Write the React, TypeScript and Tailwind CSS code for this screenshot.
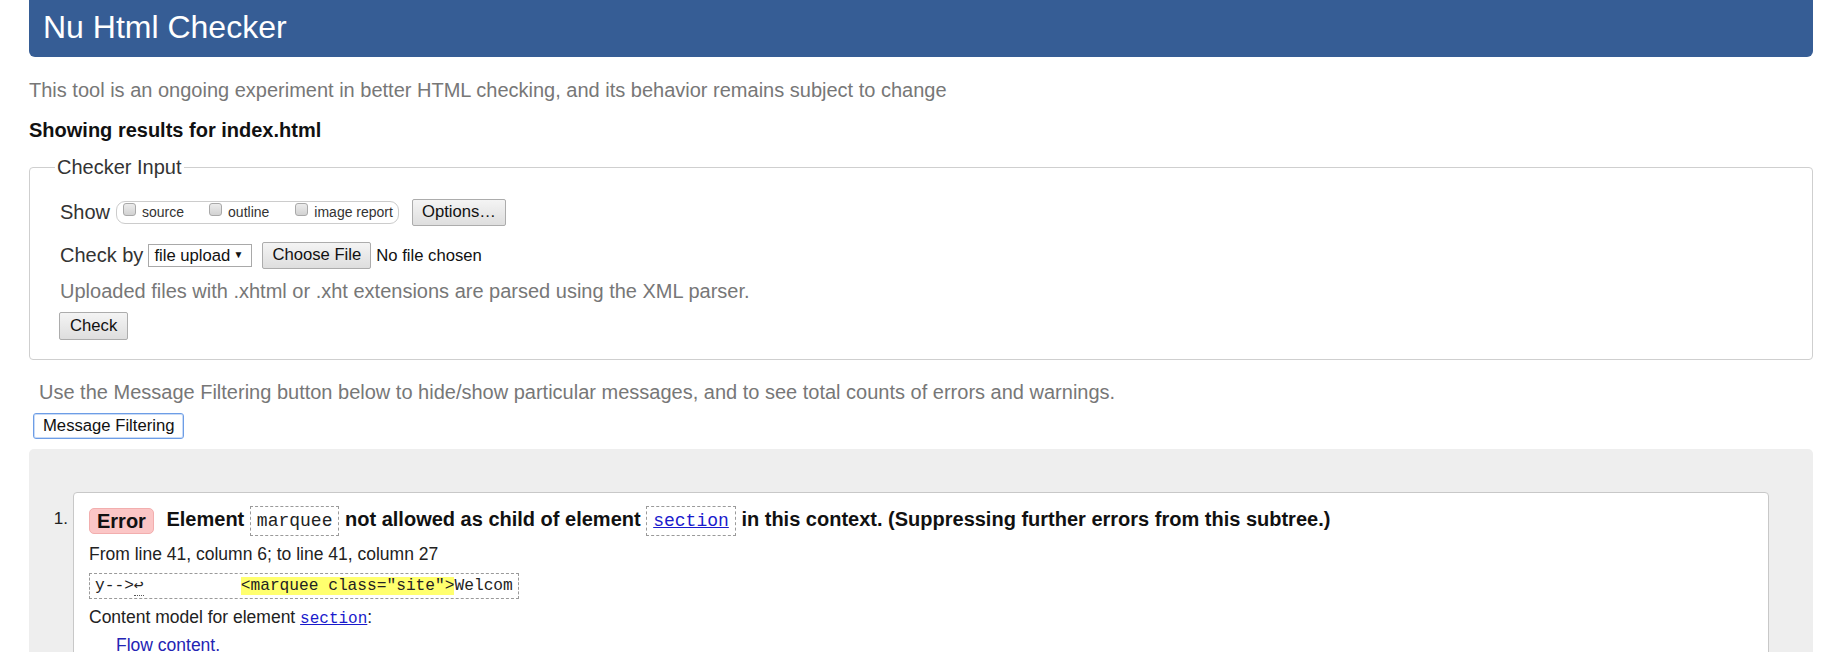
import React from "react";

const Checkbox = () => (
  <span className="inline-block w-[13px] h-[13px] mb-[5px] rounded-[3px] border border-[#a9a9a9] bg-gradient-to-b from-[#ececec] to-[#d2d2d2] shrink-0" />
);

const GrayButton = ({ children, className = "" }: { children: React.ReactNode; className?: string }) => (
  <button
    type="button"
    className={
      "inline-flex items-center h-[27px] border border-[#acacac] rounded-[2px] bg-gradient-to-b from-[#f4f4f4] to-[#dedede] text-[16.67px] leading-[20px] text-[#111] " +
      className
    }
  >
    {children}
  </button>
);

const mono = { fontFamily: '"Liberation Mono", "DejaVu Sans Mono", monospace' };

export default function App() {
  return (
    <div
      className="min-h-[652px] bg-white pl-[29px] pr-[32px] text-[#222]"
      style={{ fontFamily: '"Liberation Sans", Arial, sans-serif' }}
    >
      {/* Header */}
      <header className="h-[57px] bg-[#365d95] rounded-b-[6px] flex items-center pl-[14px] pb-[4px]">
        <h1 className="text-white text-[32px] leading-[36px] font-normal">Nu Html Checker</h1>
      </header>

      <p className="mt-[21px] text-[20px] leading-[24px] text-[#777]">
        This tool is an ongoing experiment in better HTML checking, and its behavior remains subject to change
      </p>

      <p className="mt-[16px] text-[20px] leading-[24px] font-bold text-[#111]">Showing results for index.html</p>

      {/* Checker Input fieldset */}
      <fieldset className="mt-[13px] border border-[#cfcfcf] rounded-[4px] pl-[30px] pb-[19px]">
        <legend className="ml-[-5px] px-[2px] text-[20px] leading-[24px] text-[#333]">Checker Input</legend>

        <div className="mt-[19px] flex items-center h-[28px] text-[20px] text-[#333]">
          <span className="leading-[24px]">Show</span>
          <span className="ml-[6px] inline-flex items-center h-[23px] border border-[#cccccc] rounded-[9px] pl-[6px] pr-[5px] text-[14px] text-[#333]">
            <Checkbox />
            <span className="ml-[6px]">source</span>
            <span className="ml-[25px]" />
            <Checkbox />
            <span className="ml-[6px]">outline</span>
            <span className="ml-[26px]" />
            <Checkbox />
            <span className="ml-[6px]">image report</span>
          </span>
          <GrayButton className="ml-[13px] px-[9px]">Options…</GrayButton>
        </div>

        <div className="mt-[15px] flex items-center h-[28px] text-[20px] text-[#333]">
          <span className="leading-[24px]">Check by</span>
          <span className="ml-[5px] inline-flex items-center h-[23px] w-[104px] border border-[#a9a9a9] bg-white pl-[5px] text-[16.67px] text-[#111]">
            file upload
            <span className="ml-auto mr-[8px] text-[10px] leading-none">▼</span>
          </span>
          <GrayButton className="ml-[10px] px-[9px]">Choose File</GrayButton>
          <span className="ml-[5px] text-[16.67px] text-[#111]">No file chosen</span>
        </div>

        <p className="mt-[10px] text-[20px] leading-[24px] text-[#777]">
          Uploaded files with .xhtml or .xht extensions are parsed using the XML parser.
        </p>

        <div className="mt-[9px] -ml-[1px]">
          <GrayButton className="h-[28px] px-[10px]">Check</GrayButton>
        </div>
      </fieldset>

      <p className="mt-[20px] pl-[10px] text-[20px] leading-[24px] text-[#777]">
        Use the Message Filtering button below to hide/show particular messages, and to see total counts of errors and warnings.
      </p>

      <div className="mt-[9px] ml-[4px]">
        <button
          type="button"
          className="h-[26px] px-[9px] bg-white border border-[#6d9de6] rounded-[3px] shadow-[inset_0_0_0_1px_#c9dbf6] text-[16.67px] leading-[20px] text-[#111]"
        >
          Message Filtering
        </button>
      </div>

      {/* Results */}
      <div className="mt-[10px] bg-[#eeeeee] rounded-t-[5px] pt-[43px] pl-[24px] pr-[44px] pb-[40px]">
        <div className="flex">
          <div className="w-[20px] shrink-0 pt-[17px] pr-[5px] text-right text-[17px] leading-[20px] text-[#222]">1.</div>
          <div className="flex-1 bg-white border border-[#c8c8c8] rounded-[4px] pl-[15px] pt-[11px] pb-[40px]">
            <p className="text-[20px] leading-[30px] font-bold text-[#111]">
              <span className="inline-block align-middle px-[7px] leading-[24px] bg-[#fbc6c6] border border-[#f2aeae] rounded-[5px] mr-[7px]">
                Error
              </span>{" "}
              Element{" "}
              <code
                className="inline-block align-middle border border-dashed border-[#9a9a9a] px-[6px] py-[3px] leading-[22px] text-[18px] font-normal text-[#222]"
                style={mono}
              >
                marquee
              </code>{" "}
              not allowed as child of element{" "}
              <code
                className="inline-block align-middle border border-dashed border-[#9a9a9a] px-[6px] py-[3px] leading-[22px] text-[18px] font-normal"
                style={mono}
              >
                <a href="#" className="text-[#1a1acc] underline">section</a>
              </code>{" "}
              in this context. (Suppressing further errors from this subtree.)
            </p>

            <p className="mt-[8px] text-[17.5px] leading-[20px] text-[#222]">From line 41, column 6; to line 41, column 27</p>

            <div
              className="mt-[9px] inline-block border border-dashed border-[#9a9a9a] px-[5px] py-[2px] text-[16.2px] leading-[20px] text-[#222] whitespace-pre"
              style={mono}
            >
              y--&gt;
              <span className="inline-block border-b border-dotted border-[#555] leading-[17px]">↩</span>
              {"          "}
              <span className="bg-[#ffff6e]">&lt;marquee class="site"&gt;</span>Welcom
            </div>

            <p className="mt-[8px] text-[17.5px] leading-[20px] text-[#222]">
              Content model for element{" "}
              <a href="#" className="text-[#1a1acc] underline text-[16px]" style={mono}>
                section
              </a>
              :
            </p>

            <p className="mt-[6px] pl-[27px] text-[17.5px] leading-[20px] text-[#2424b4]">Flow content.</p>
          </div>
        </div>
      </div>
    </div>
  );
}
